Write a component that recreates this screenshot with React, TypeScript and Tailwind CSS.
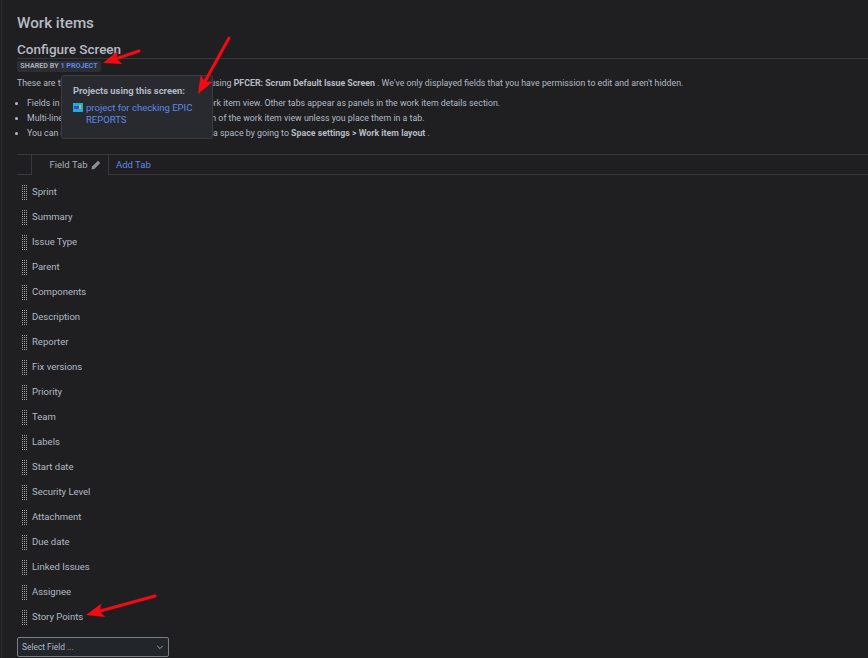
const fields = ["Sprint","Summary","Issue Type","Parent","Components","Description","Reporter","Fix versions","Priority","Team","Labels","Start date","Security Level","Attachment","Due date","Linked Issues","Assignee","Story Points"];

function Grip() {
  return (
    <svg width="5" height="16" viewBox="0 0 5 16" className="shrink-0">
      {[0,1,2,3,4,5,6,7].map((r) => [0,2,4].map((c) => (
        <rect key={`${r}-${c}`} x={c} y={r * 2} width="1" height="1" fill="#a1a1a1" />
      )))}
    </svg>
  );
}

function Arrow({ className, x1, y1, x2, y2, w, h }: { className: string; x1: number; y1: number; x2: number; y2: number; w: number; h: number }) {
  const a = Math.atan2(y2 - y1, x2 - x1);
  const bx = x2 - Math.cos(a) * 18, by = y2 - Math.sin(a) * 18;
  const px = -Math.sin(a) * 7, py = Math.cos(a) * 7;
  const sx = x2 - Math.cos(a) * 14, sy = y2 - Math.sin(a) * 14;
  return (
    <svg width={w} height={h} viewBox={`0 0 ${w} ${h}`} className={className}>
      <line x1={x1} y1={y1} x2={sx} y2={sy} stroke="#f40a12" strokeWidth="3" strokeLinecap="round" />
      <polygon points={`${x2},${y2} ${bx + px},${by + py} ${sx},${sy} ${bx - px},${by - py}`} fill="#f40a12" />
    </svg>
  );
}

export default function App() {
  return (
    <div className="relative h-[658px] w-[868px] overflow-hidden bg-[#1f1f21] pl-[17px] font-['Roboto',sans-serif] text-[9.5px] text-[#b3b9c4]">
      <div className="absolute bottom-0 left-[1px] top-0 w-px bg-[#2b2c2f]" />
      <h1 className="pt-[13px] text-[15.2px] font-medium leading-[20px] text-[#b6bbc4]">Work items</h1>
      <h2 className="mt-[8px] border-b border-[#38393c] text-[13.5px] font-medium leading-[17px] text-[#b6bbc4]">Configure Screen</h2>
      <div className="mt-[2px] flex h-[11px] w-[84px] items-center justify-center rounded-[2px] bg-[#2c2e33] text-[7.2px] font-bold text-[#a6acb8]">
        SHARED BY&nbsp;<span className="text-[#5e88e8]">1 PROJECT</span>
      </div>
      <p className="mt-[5px] text-[8.8px] leading-[13px]">These are the fields that appear in a screen when using <b className="font-bold text-[#b6bbc4]">PFCER: Scrum Default Issue Screen</b> . We've only displayed fields that you have permission to edit and aren't hidden.</p>
      <ul className="ml-[10px] mt-[6px] list-disc text-[8.8px] leading-[15px]">
        <li>Fields in the first tab appear at the left of the work item view. Other tabs appear as panels in the work item details section.</li>
        <li>Multi-line text fields appear in the largest section of the work item view unless you place them in a tab.</li>
        <li>You can change how these fields are ordered in a space by going to <b className="font-bold text-[#b6bbc4]">Space settings &gt; Work item layout</b> .</li>
      </ul>
      <div className="mt-[13px] flex h-[21px] border-y border-[#38393c]">
        <div className="ml-[14px] -mb-px flex w-[78px] items-center justify-center gap-[3px] border-x border-[#38393c] bg-[#1f1f21] pl-[10px] text-[#a8aeb9]">
          Field Tab
          <svg width="10" height="10" viewBox="0 0 10 10"><path d="M0.5 9.5 L1 6.5 L7 0.7 L9.3 3 L3.4 8.9 Z" fill="#8c8f94" /></svg>
        </div>
        <span className="ml-[7px] flex items-center pt-[2px] text-[#5e88e8]">Add Tab</span>
      </div>
      <div className="mt-[5px]">
        {fields.map((f) => (
          <div key={f} className="flex h-[25px] items-center gap-[5px] pl-[5px]"><Grip />{f}</div>
        ))}
      </div>
      <div className="mt-[7px] flex h-[20px] w-[152px] items-center justify-between rounded-[2px] border border-[#7a7d82] bg-[#22252a] pl-[4px] pr-[4px] text-[8.4px] text-[#b3b9c4]">
        Select Field ...
        <svg width="8" height="8" viewBox="0 0 8 8"><path d="M1.2 2.8 L4 5.6 L6.8 2.8" fill="none" stroke="#a1a6af" strokeWidth="1" /></svg>
      </div>

      <div className="absolute left-[61px] top-[75px] h-[64px] w-[152px] rounded-[3px] border border-[#3a3c41] bg-[#282a2f] pl-[11px] pt-[9px]">
        <div className="text-[9.4px] font-bold leading-[12px] text-[#b3b9c4]">Projects using this screen:</div>
        <div className="mt-[5px] flex">
          <svg width="10" height="9" viewBox="0 0 10 9" className="mr-[3px] mt-[1px] shrink-0"><rect width="10" height="9" fill="#12b5d6" /><rect x="1" y="3" width="5" height="3" fill="#4a3fd6" /><rect x="6" y="2" width="2" height="4" fill="#e0a84a" /></svg>
          <span className="leading-[12px] text-[#5e88e8]">project for checking EPIC REPORTS</span>
        </div>
      </div>

      <Arrow className="absolute left-[100px] top-[48px]" x1={39} y1={3} x2={3} y2={15} w={42} h={20} />
      <Arrow className="absolute left-[195px] top-[34px]" x1={34} y1={4} x2={3} y2={60} w={38} h={64} />
      <Arrow className="absolute left-[84px] top-[594px]" x1={71} y1={2} x2={2} y2={21} w={74} h={24} />
    </div>
  );
}
